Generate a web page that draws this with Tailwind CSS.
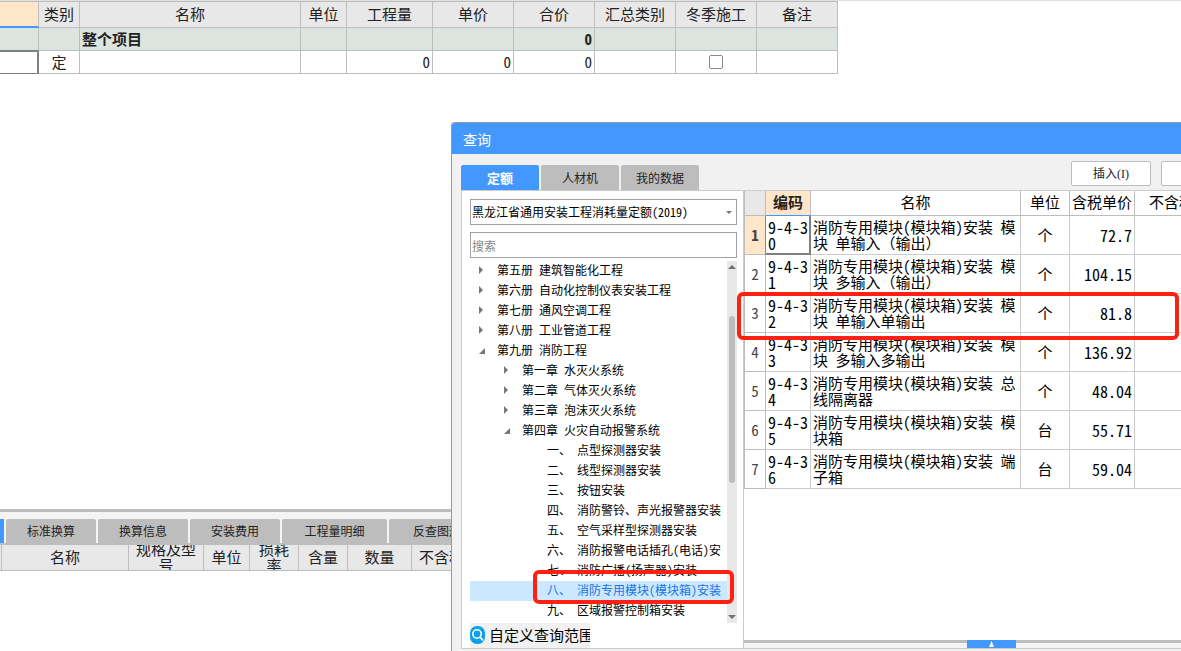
<!DOCTYPE html>
<html lang="zh-CN">
<head>
<meta charset="utf-8">
<meta name="viewport" content="width=device-width, initial-scale=1">
<title>查询</title>
<script src="https://cdn.jsdelivr.net/npm/@tailwindcss/browser@4"></script>
</head>
<body class="relative flex h-screen flex-col overflow-hidden bg-white font-['Noto_Sans_Mono_CJK_SC','Noto_Sans_CJK_SC',sans-serif] text-[15px] leading-4 text-[#222]">

<!-- Project grid -->
<main class="min-h-0 flex-1 overflow-hidden border-t border-[#e0e0e0]">
  <table class="w-[838px] table-fixed border-separate border-spacing-0 border-t border-[#bdbdbd] [&_td]:border-r [&_td]:border-b [&_td]:border-[#bdbdbd] [&_td]:p-0 [&_th]:border-r [&_th]:border-b [&_th]:border-[#bdbdbd] [&_th]:p-0 [&_th]:pb-0.5 [&_th]:font-normal">
    <colgroup><col class="w-[39px]"><col class="w-[41px]"><col class="w-[221px]"><col class="w-[46px]"><col class="w-[86px]"><col class="w-[81px]"><col class="w-[81px]"><col class="w-[81px]"><col class="w-[81px]"><col class="w-[81px]"></colgroup>
    <thead>
      <tr class="h-[26px] bg-[#e8e8e8]">
        <th class="border-b-2! border-b-[#4398ff]! bg-[#ffe6c8]"></th><th>类别</th><th>名称</th><th>单位</th><th>工程量</th><th>单价</th><th>合价</th><th>汇总类别</th><th>冬季施工</th><th>备注</th>
      </tr>
    </thead>
    <tbody>
      <tr class="h-[23px] bg-[#dbe4de] font-bold">
        <td class="border-b-[#808080]!"></td><td></td><td><span class="pl-0.5">整个项目</span></td><td></td><td></td><td></td><td class="text-right"><span class="pr-0.5">0</span></td><td></td><td></td><td></td>
      </tr>
      <tr class="h-[23px]">
        <td class="border-[#808080]! shadow-[inset_-1px_1px_0_#808080]"></td><td class="text-center">定</td><td></td><td></td>
        <td class="text-right"><span class="pr-0.5">0</span></td><td class="text-right"><span class="pr-0.5">0</span></td><td class="text-right"><span class="pr-0.5">0</span></td><td></td>
        <td><input type="checkbox" aria-label="冬季施工" class="mx-auto block size-[14px] appearance-none rounded-xs border border-[#8a8a8a] bg-white"></td><td></td>
      </tr>
    </tbody>
  </table>
</main>

<!-- Detail dock -->
<section class="h-[142px] shrink-0 overflow-hidden border-t-[3px] border-[#bdbdbd] bg-white">
  <div class="flex gap-0.5 overflow-hidden border-b-2 border-[#bdbdbd] bg-[#f4f4f4] pt-[7px] text-xs" role="tablist">
    <button class="h-6 w-1 shrink-0 bg-[#4398ff]" role="tab" aria-label="当前页"></button>
    <button class="h-6 w-[90px] shrink-0 rounded-t-xs bg-[#bdbdbd]" role="tab">标准换算</button>
    <button class="h-6 w-[90px] shrink-0 rounded-t-xs bg-[#bdbdbd]" role="tab">换算信息</button>
    <button class="h-6 w-[90px] shrink-0 rounded-t-xs bg-[#bdbdbd]" role="tab">安装费用</button>
    <button class="h-6 w-[105px] shrink-0 rounded-t-xs bg-[#bdbdbd]" role="tab">工程量明细</button>
    <button class="h-6 w-[120px] shrink-0 rounded-t-xs bg-[#bdbdbd]" role="tab">反查图形工程</button>
  </div>
  <table class="w-[502px] table-fixed border-separate border-spacing-0 [&_div]:flex [&_div]:h-[25px] [&_div]:items-center [&_div]:justify-center [&_div]:overflow-hidden [&_div]:pb-0.5 [&_th]:border-r [&_th]:border-b [&_th]:border-[#bdbdbd] [&_th]:bg-[#e8e8e8] [&_th]:p-0 [&_th]:font-normal">
    <colgroup><col class="w-[2px]"><col class="w-[127px]"><col class="w-[75px]"><col class="w-[46px]"><col class="w-[49px]"><col class="w-[49px]"><col class="w-[64px]"><col class="w-[90px]"></colgroup>
    <thead><tr>
      <th></th><th><div>名称</div></th><th><div>规格及型<br>号</div></th><th><div>单位</div></th><th><div>损耗<br>率</div></th><th><div>含量</div></th><th><div>数量</div></th><th><div class="whitespace-nowrap">不含税单价</div></th>
    </tr></thead>
  </table>
</section>

<!-- Query window -->
<div role="dialog" aria-labelledby="query-title" class="absolute top-[122px] right-0 bottom-0 left-[451px] flex flex-col overflow-hidden rounded-tl-sm border-t border-l border-[#999] bg-[#f1f1f1] text-black">
  <h1 id="query-title" class="flex h-[31px] shrink-0 items-center bg-[#4398ff] pl-[11px] text-sm text-white">查询</h1>
  <div class="flex h-9 shrink-0 items-end pl-[9px]">
    <div class="flex flex-1 gap-0.5 text-xs text-[#222]" role="tablist">
      <button role="tab" aria-selected="true" class="h-[25px] w-[78px] rounded-t-xs bg-[#4398ff] text-[13px] font-bold text-white">定额</button>
      <button role="tab" class="h-[25px] w-[78px] rounded-t-xs bg-[#bdbdbd]">人材机</button>
      <button role="tab" class="h-[25px] w-[78px] rounded-t-xs bg-[#bdbdbd]">我的数据</button>
    </div>
    <div class="flex w-[110px] shrink-0 gap-2.5 self-start overflow-hidden pt-[7px] text-xs text-[#222]">
      <button class="h-[25px] w-20 shrink-0 rounded-xs border border-[#bdbdbd] bg-white font-['Liberation_Serif','Noto_Sans_CJK_SC',serif]">插入(I)</button>
      <button class="h-[25px] w-20 shrink-0 rounded-xs border border-[#bdbdbd] bg-white" aria-label="替换"></button>
    </div>
  </div>

  <div class="mb-[2px] ml-[9px] flex min-h-0 flex-1 border-t border-b border-l border-[#ccc] bg-white">
    <!-- Catalogue tree -->
    <aside class="flex w-[282px] shrink-0 flex-col border-r border-[#ccc] pt-2 pl-2 text-xs">
      <div class="relative mr-1.5">
        <select aria-label="定额库" class="block h-[26px] w-full appearance-none border border-[#a0a0a0] bg-white pl-px">
          <option>黑龙江省通用安装工程消耗量定额(2019)</option>
        </select>
        <svg class="pointer-events-none absolute top-3 right-[5px] h-[3px] w-[6px]" viewBox="0 0 6 3"><path d="M0 0H6L3 3Z" fill="#777"/></svg>
      </div>
      <input type="text" placeholder="搜索" aria-label="搜索" class="mt-[7px] mr-1.5 block h-[26px] shrink-0 border border-[#a0a0a0] bg-white pl-px placeholder:text-[#888]">
      <div class="mt-[3px] mr-1.5 flex min-h-0 flex-1 overflow-hidden">
        <ul role="tree" class="min-w-0 flex-1 overflow-hidden whitespace-nowrap [&_svg]:h-2 [&_svg]:w-[6px] [&>li]:flex [&>li]:h-5 [&>li]:items-center [&>li]:pb-0.5">
          <li role="treeitem" class="pl-[9px]"><svg class="mr-3" viewBox="0 0 6 8"><path d="M0 0L4 4L0 8Z" fill="#777"/></svg>第五册 建筑智能化工程</li>
          <li role="treeitem" class="pl-[9px]"><svg class="mr-3" viewBox="0 0 6 8"><path d="M0 0L4 4L0 8Z" fill="#777"/></svg>第六册 自动化控制仪表安装工程</li>
          <li role="treeitem" class="pl-[9px]"><svg class="mr-3" viewBox="0 0 6 8"><path d="M0 0L4 4L0 8Z" fill="#777"/></svg>第七册 通风空调工程</li>
          <li role="treeitem" class="pl-[9px]"><svg class="mr-3" viewBox="0 0 6 8"><path d="M0 0L4 4L0 8Z" fill="#777"/></svg>第八册 工业管道工程</li>
          <li role="treeitem" class="pl-[9px]"><svg class="mr-3" viewBox="0 0 6 8"><path d="M6 2V8H0Z" fill="#777"/></svg>第九册 消防工程</li>
          <li role="treeitem" class="pl-[34px]"><svg class="mr-3" viewBox="0 0 6 8"><path d="M0 0L4 4L0 8Z" fill="#777"/></svg>第一章 水灭火系统</li>
          <li role="treeitem" class="pl-[34px]"><svg class="mr-3" viewBox="0 0 6 8"><path d="M0 0L4 4L0 8Z" fill="#777"/></svg>第二章 气体灭火系统</li>
          <li role="treeitem" class="pl-[34px]"><svg class="mr-3" viewBox="0 0 6 8"><path d="M0 0L4 4L0 8Z" fill="#777"/></svg>第三章 泡沫灭火系统</li>
          <li role="treeitem" class="pl-[34px]"><svg class="mr-3" viewBox="0 0 6 8"><path d="M6 2V8H0Z" fill="#777"/></svg>第四章 火灾自动报警系统</li>
          <li role="treeitem" class="pl-[77px]">一、 点型探测器安装</li>
          <li role="treeitem" class="pl-[77px]">二、 线型探测器安装</li>
          <li role="treeitem" class="pl-[77px]">三、 按钮安装</li>
          <li role="treeitem" class="pl-[77px]">四、 消防警铃、声光报警器安装</li>
          <li role="treeitem" class="pl-[77px]">五、 空气采样型探测器安装</li>
          <li role="treeitem" class="pl-[77px]">六、 消防报警电话插孔(电话)安</li>
          <li role="treeitem" class="pl-[77px]">七、 消防广播(扬声器)安装</li>
          <li role="treeitem" aria-selected="true" class="bg-[#cce8ff] pl-[77px] text-[#1a73e8]">八、 消防专用模块(模块箱)安装</li>
          <li role="treeitem" class="pl-[77px]">九、 区域报警控制箱安装</li>
        </ul>
        <div class="flex w-2.5 shrink-0 flex-col items-center bg-[#e8e8e8] py-1">
          <svg class="h-1 w-2" viewBox="0 0 8 4"><path d="M0 4L4 0L8 4Z" fill="#707078"/></svg>
          <div class="mt-[47px] h-[167px] w-1.5 rounded-full bg-[#bdbdbd]"></div>
          <svg class="mt-auto h-1 w-2" viewBox="0 0 8 4"><path d="M0 0L4 4L8 0Z" fill="#707078"/></svg>
        </div>
      </div>
      <button class="flex h-[25px] w-[120px] shrink-0 items-center gap-1 overflow-hidden bg-[#f1f1f1] pb-0.5 text-[15px] whitespace-nowrap">
        <svg class="h-[18px] w-[15px] shrink-0" viewBox="0 0 15 18"><rect width="15" height="18" rx="7" fill="#0aa0ea"/><circle cx="7" cy="8" r="4.2" fill="none" stroke="#fff" stroke-width="1.6"/><path d="M10 11L13 14.500" stroke="#fff" stroke-width="1.8"/></svg>
        自定义查询范围
      </button>
    </aside>

    <!-- Quota list -->
    <section class="flex min-w-0 flex-1 flex-col overflow-hidden">
      <div class="min-h-0 flex-1 overflow-hidden">
        <table class="w-[495px] table-fixed border-separate border-spacing-0 border-l border-[#bdbdbd] text-center [&_tbody_th]:text-[#444] [&_tbody_tr]:h-[39px] [&_td]:border-r [&_td]:border-b [&_td]:border-[#ccc] [&_td]:p-0 [&_td:nth-child(2)]:pl-0.5 [&_td:nth-child(2)]:text-left [&_td:nth-child(2)]:text-base [&_td:nth-child(2)]:leading-4 [&_td:nth-child(3)]:pl-0.5 [&_td:nth-child(3)]:text-left [&_td:nth-child(3)]:whitespace-nowrap [&_td:nth-child(5)]:pr-0.5 [&_td:nth-child(5)]:text-right [&_td:nth-child(5)]:text-base [&_th]:border-r [&_th]:border-b [&_th]:border-[#bdbdbd] [&_th]:p-0 [&_th]:font-normal [&_thead_th]:pb-0.5">
          <colgroup><col class="w-[21px]"><col class="w-[45px]"><col class="w-[210px]"><col class="w-[49px]"><col class="w-[65px]"><col class="w-[104px]"></colgroup>
          <thead><tr class="h-[25px]">
            <th class="bg-[#e8e8e8]"></th><th class="border-b-[#4398ff]! bg-[#ffe6c8] text-[#222]"><b>编码</b></th><th>名称</th><th>单位</th><th>含税单价</th><th>不含税单价</th>
          </tr></thead>
          <tbody>
            <tr><th class="border-r-[#4398ff]! bg-[#ffe6c8]"><b>1</b></th><td class="border-[#808080]! shadow-[inset_-1px_-1px_0_#808080]">9-4-3<br>0</td><td>消防专用模块(模块箱)安装 模<br>块 单输入（输出）</td><td>个</td><td>72.7</td><td></td></tr>
            <tr><th>2</th><td>9-4-3<br>1</td><td>消防专用模块(模块箱)安装 模<br>块 多输入（输出）</td><td>个</td><td>104.15</td><td></td></tr>
            <tr><th>3</th><td>9-4-3<br>2</td><td>消防专用模块(模块箱)安装 模<br>块 单输入单输出</td><td>个</td><td>81.8</td><td></td></tr>
            <tr><th>4</th><td>9-4-3<br>3</td><td>消防专用模块(模块箱)安装 模<br>块 多输入多输出</td><td>个</td><td>136.92</td><td></td></tr>
            <tr><th>5</th><td>9-4-3<br>4</td><td>消防专用模块(模块箱)安装 总<br>线隔离器</td><td>个</td><td>48.04</td><td></td></tr>
            <tr><th>6</th><td>9-4-3<br>5</td><td>消防专用模块(模块箱)安装 模<br>块箱</td><td>台</td><td>55.71</td><td></td></tr>
            <tr><th>7</th><td>9-4-3<br>6</td><td>消防专用模块(模块箱)安装 端<br>子箱</td><td>台</td><td>59.04</td><td></td></tr>
          </tbody>
        </table>
      </div>
      <div class="flex h-2 shrink-0 bg-[#f4f4f4]">
        <div class="h-[3px] w-[223px] bg-[#bdbdbd]"></div>
        <button aria-label="展开" class="flex h-2 w-[49px] items-center justify-center bg-[#4398ff]"><svg class="h-1.5 w-[5px]" viewBox="0 0 5 6"><path d="M2.500 0L5 6H0Z" fill="#fff"/></svg></button>
        <div class="h-[3px] flex-1 bg-[#bdbdbd]"></div>
      </div>
    </section>
  </div>
</div>

<!-- Highlight markers -->
<div class="pointer-events-none absolute top-[292px] left-[737px] h-[48px] w-[442px] rounded-md border-4 border-[#ff2014]"></div>
<div class="pointer-events-none absolute top-[570px] left-[533px] h-[34px] w-[201px] rounded-md border-4 border-[#ff2014]"></div>
</body>
</html>
